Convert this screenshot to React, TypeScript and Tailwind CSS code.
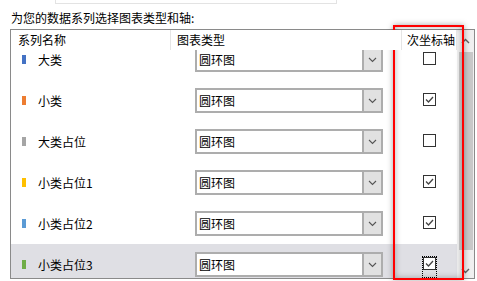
import React from 'react';

interface SeriesRow {
  name: string;
  color: string;
  chartType: string;
  secondary: boolean;
}

const rows: SeriesRow[] = [
  { name: '大类', color: 'bg-[#4472c4]', chartType: '圆环图', secondary: false },
  { name: '小类', color: 'bg-[#ed7d31]', chartType: '圆环图', secondary: true },
  { name: '大类占位', color: 'bg-[#a5a5a5]', chartType: '圆环图', secondary: false },
  { name: '小类占位1', color: 'bg-[#ffc000]', chartType: '圆环图', secondary: true },
  { name: '小类占位2', color: 'bg-[#5b9bd5]', chartType: '圆环图', secondary: true },
  { name: '小类占位3', color: 'bg-[#70ad47]', chartType: '圆环图', secondary: true },
];

const Checkbox = ({ checked, focused }: { checked: boolean; focused?: boolean }) => (
  <div className="relative -mt-[3px]">
    <div className="w-[13px] h-[13px] border border-[#333333] bg-white flex items-center justify-center">
      {checked && (
        <svg width="11" height="11" viewBox="0 0 11 11">
          <path d="M2 5.5 L4.5 8 L9 3" fill="none" stroke="#444" strokeWidth="1.3" />
        </svg>
      )}
    </div>
    {focused && (
      <div className="absolute -left-[1px] -top-[1px] w-[15px] h-[22px] border border-dotted border-black" />
    )}
  </div>
);

const ComboBox = ({ value }: { value: string }) => (
  <div className="flex w-[188px] h-[25px] border-2 border-[#adadad] bg-white">
    <div className="flex-1 flex items-center pl-[2px] text-black">{value}</div>
    <div className="w-[19px] bg-[#e1e1e1] border-l-2 border-[#adadad] flex items-center justify-center">
      <svg width="9" height="6" viewBox="0 0 9 6">
        <path d="M1 1 L4.5 4.5 L8 1" fill="none" stroke="#555" strokeWidth="1.1" />
      </svg>
    </div>
  </div>
);

const App = () => {
  return (
    <div
      className="relative w-[477px] h-[281px] bg-white overflow-hidden text-[12px] leading-[14px] text-black"
      style={{ fontFamily: '"Noto Sans CJK SC", "Noto Sans", sans-serif' }}
    >
      <div className="ml-[55px] w-[282px] h-[4px] border-x border-b border-[#e3e3e3]" />
      <div className="pl-[11px] mt-[7px] h-[14px]">为您的数据系列选择图表类型和轴:</div>

      <div className="ml-[10px] mt-[4px] w-[465px] h-[250px] border border-[#8a8a8a] flex">
        <div className="flex-1 flex flex-col">
          {/* header */}
          <div className="flex h-[20px] shrink-0 bg-white relative z-10">
            <div className="w-[160px] pl-[7px] pt-[3px] border-r border-[#e5e5e5]">系列名称</div>
            <div className="w-[231px] pl-[6px] pt-[3px] border-r border-[#e5e5e5]">图表类型</div>
            <div className="flex-1 pl-[5px] pt-[3px] border-r border-[#e5e5e5]">次坐标轴</div>
          </div>
          {/* rows */}
          <div className="flex-1 overflow-hidden">
            <div className="-mt-[11px]">
              {rows.map((row, i) => (
                <div
                  key={row.name}
                  className={`flex items-center h-[41px] ${i === rows.length - 1 ? 'bg-[#dfdfe4]' : ''}`}
                >
                  <div className="w-[160px] flex items-center pl-[11px] gap-[12px]">
                    <div className={`w-[4px] h-[9px] ${row.color}`} />
                    <span>{row.name}</span>
                  </div>
                  <div className="w-[231px] pl-[24px]">
                    <ComboBox value={row.chartType} />
                  </div>
                  <div className="flex-1 flex justify-center">
                    <Checkbox checked={row.secondary} focused={i === rows.length - 1} />
                  </div>
                </div>
              ))}
            </div>
          </div>
        </div>
        {/* scrollbar */}
        <div className="w-[17px] bg-[#f0f0f0] flex flex-col items-center">
          <div className="h-[22px] flex items-center justify-center">
            <svg width="9" height="6" viewBox="0 0 9 6">
              <path d="M1 5 L4.5 1.5 L8 5" fill="none" stroke="#606060" strokeWidth="1.4" />
            </svg>
          </div>
          <div className="w-[14px] h-[198px] bg-[#c8c8c8]" />
          <div className="flex-1 flex items-end pb-[4px] justify-center">
            <svg width="9" height="6" viewBox="0 0 9 6">
              <path d="M1 1 L4.5 4.5 L8 1" fill="none" stroke="#606060" strokeWidth="1.4" />
            </svg>
          </div>
        </div>
      </div>

      {/* highlight frame */}
      <div className="absolute left-[393px] top-[25px] w-[71px] h-[255px] border-2 border-[#ff0000] shadow-[0_0_6px_rgba(0,0,0,0.35),inset_0_0_6px_rgba(0,0,0,0.3)]" />
    </div>
  );
};

export default App;
